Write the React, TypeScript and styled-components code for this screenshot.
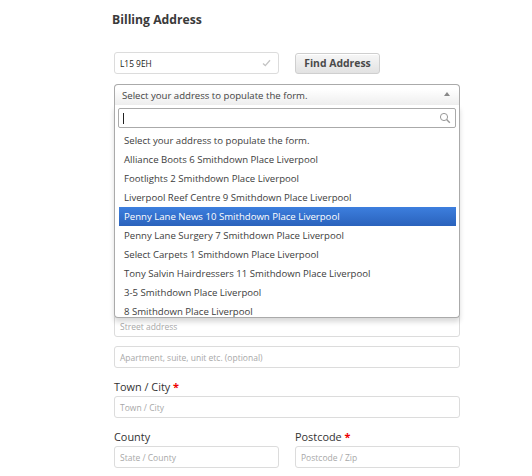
import { createGlobalStyle, styled } from 'styled-components'

const GlobalStyle = createGlobalStyle`
  html, body {
    margin: 0;
    padding: 0;
    background: #fff;
  }
  body {
    font-family: 'Open Sans', 'Liberation Sans', sans-serif;
    color: #333;
  }
`

const Page = styled.div`
  width: 346px;
  padding: 12px 0 0 114px;
`

const Title = styled.h3`
  margin: 0 0 0 -2px;
  font-size: 12.2px;
  line-height: 16px;
  font-weight: 700;
  color: #3a3a3a;
`

const LookupRow = styled.div`
  display: flex;
  align-items: center;
  gap: 16px;
  margin-top: 24px;
`

const Input = styled.div<{ $width?: number }>`
  box-sizing: border-box;
  position: relative;
  width: ${(p) => (p.$width ? `${p.$width}px` : '100%')};
  height: 22px;
  padding: 0 5px;
  display: flex;
  align-items: center;
  border: 1px solid #dcdcdc;
  border-radius: 3px;
  background: #fff;
  font-size: 8.5px;
  color: #a8a8a8;
  white-space: nowrap;
`

const Value = styled.span`
  flex: 1;
  font-size: 8.4px;
  color: #222;
`

const Check = styled.svg`
  width: 9px;
  height: 8px;
  margin-right: 2px;
`

const Button = styled.button`
  box-sizing: border-box;
  width: 85px;
  height: 21px;
  padding: 0;
  border: 1px solid #cfcfcf;
  border-radius: 3px;
  background: linear-gradient(#f7f7f7, #e2e2e2);
  box-shadow: inset 0 1px 0 #fff;
  font-family: inherit;
  font-size: 10.4px;
  font-weight: 700;
  color: #4a4a4a;
`

const SelectWrap = styled.div`
  position: relative;
  margin: 10px 0 42px;
`

const SelectHead = styled.div`
  box-sizing: border-box;
  height: 21px;
  padding: 0 9px 0 7px;
  display: flex;
  align-items: center;
  justify-content: space-between;
  border: 1px solid #aaa;
  border-bottom: none;
  border-radius: 4px 4px 0 0;
  background: linear-gradient(#fff 20%, #eee);
  font-size: 9.6px;
  color: #444;
`

const Arrow = styled.span`
  width: 0;
  height: 0;
  border-left: 3px solid transparent;
  border-right: 3px solid transparent;
  border-bottom: 4px solid #888;
  margin-top: -2px;
`

const Dropdown = styled.div`
  position: absolute;
  top: 100%;
  left: 0;
  right: 0;
  z-index: 10;
  box-sizing: border-box;
  padding: 3px 3px 0;
  border: 1px solid #aaa;
  border-top: none;
  border-radius: 0 0 4px 4px;
  background: #fff;
  box-shadow: 0 4px 5px rgba(0, 0, 0, 0.15);
`

const Search = styled.div`
  box-sizing: border-box;
  height: 20px;
  display: flex;
  align-items: center;
  justify-content: space-between;
  padding: 0 4px;
  border: 1px solid #aaa;
  border-radius: 2px;
  background: #fff;
`

const Caret = styled.span`
  width: 1px;
  height: 11px;
  background: #222;
`

const Results = styled.ul`
  list-style: none;
  margin: 3px 0 0;
  padding: 0 0 0 1px;
  height: 186px;
  overflow: hidden;
`

const Option = styled.li<{ $active?: boolean }>`
  height: 19px;
  line-height: 19px;
  padding: 0 5px;
  font-size: 9.6px;
  white-space: nowrap;
  color: ${(p) => (p.$active ? '#fff' : '#3d3d3d')};
  background: ${(p) => (p.$active ? 'linear-gradient(#3d7fde, #2a62bc)' : 'transparent')};
`

const Field = styled.div`
  margin-bottom: 10px;
`

const Label = styled.div`
  height: 18px;
  line-height: 18px;
  font-size: 10.9px;
  color: #333;
`

const Required = styled.span`
  color: #e00;
  font-weight: 700;
`

const Stack = styled.div`
  display: flex;
  flex-direction: column;
  gap: 9px;
`

const Columns = styled.div`
  display: grid;
  grid-template-columns: 165px 165px;
  gap: 16px;
`

const options = [
  'Select your address to populate the form.',
  'Alliance Boots 6 Smithdown Place Liverpool',
  'Footlights 2 Smithdown Place Liverpool',
  'Liverpool Reef Centre 9 Smithdown Place Liverpool',
  'Penny Lane News 10 Smithdown Place Liverpool',
  'Penny Lane Surgery 7 Smithdown Place Liverpool',
  'Select Carpets 1 Smithdown Place Liverpool',
  'Tony Salvin Hairdressers 11 Smithdown Place Liverpool',
  '3-5 Smithdown Place Liverpool',
  '8 Smithdown Place Liverpool',
]

export default function App() {
  return (
    <Page>
      <GlobalStyle />
      <Title>Billing Address</Title>

      <LookupRow>
        <Input $width={165}>
          <Value>L15 9EH</Value>
          <Check viewBox="0 0 9 8">
            <path d="M1 4.5 L3.3 6.6 L8 1.2" fill="none" stroke="#c4c4c4" strokeWidth="1.3" />
          </Check>
        </Input>
        <Button>Find Address</Button>
      </LookupRow>

      <SelectWrap>
        <SelectHead>
          <span>Select your address to populate the form.</span>
          <Arrow />
        </SelectHead>
        <Dropdown>
          <Search>
            <Caret />
            <svg width="12" height="12" viewBox="0 0 12 12">
              <circle cx="5" cy="5" r="3.6" fill="none" stroke="#999" strokeWidth="1" />
              <path d="M7.6 7.6 L10.8 10.8" stroke="#999" strokeWidth="1.4" />
            </svg>
          </Search>
          <Results>
            {options.map((o, i) => (
              <Option key={o} $active={i === 4}>
                {o}
              </Option>
            ))}
          </Results>
        </Dropdown>
      </SelectWrap>

      {/* empty fields that the open dropdown covers */}
      <Field>
        <Label />
        <Input />
      </Field>
      <Field>
        <Label />
        <Input />
      </Field>
      <Field>
        <Label />
        <Input />
      </Field>

      <Field>
        <Label />
        <Stack>
          <Input>Street address</Input>
          <Input>Apartment, suite, unit etc. (optional)</Input>
        </Stack>
      </Field>

      <Field>
        <Label>Town / City <Required>*</Required></Label>
        <Input>Town / City</Input>
      </Field>

      <Columns>
        <Field>
          <Label>County</Label>
          <Input>State / County</Input>
        </Field>
        <Field>
          <Label>Postcode <Required>*</Required></Label>
          <Input>Postcode / Zip</Input>
        </Field>
      </Columns>
    </Page>
  )
}
